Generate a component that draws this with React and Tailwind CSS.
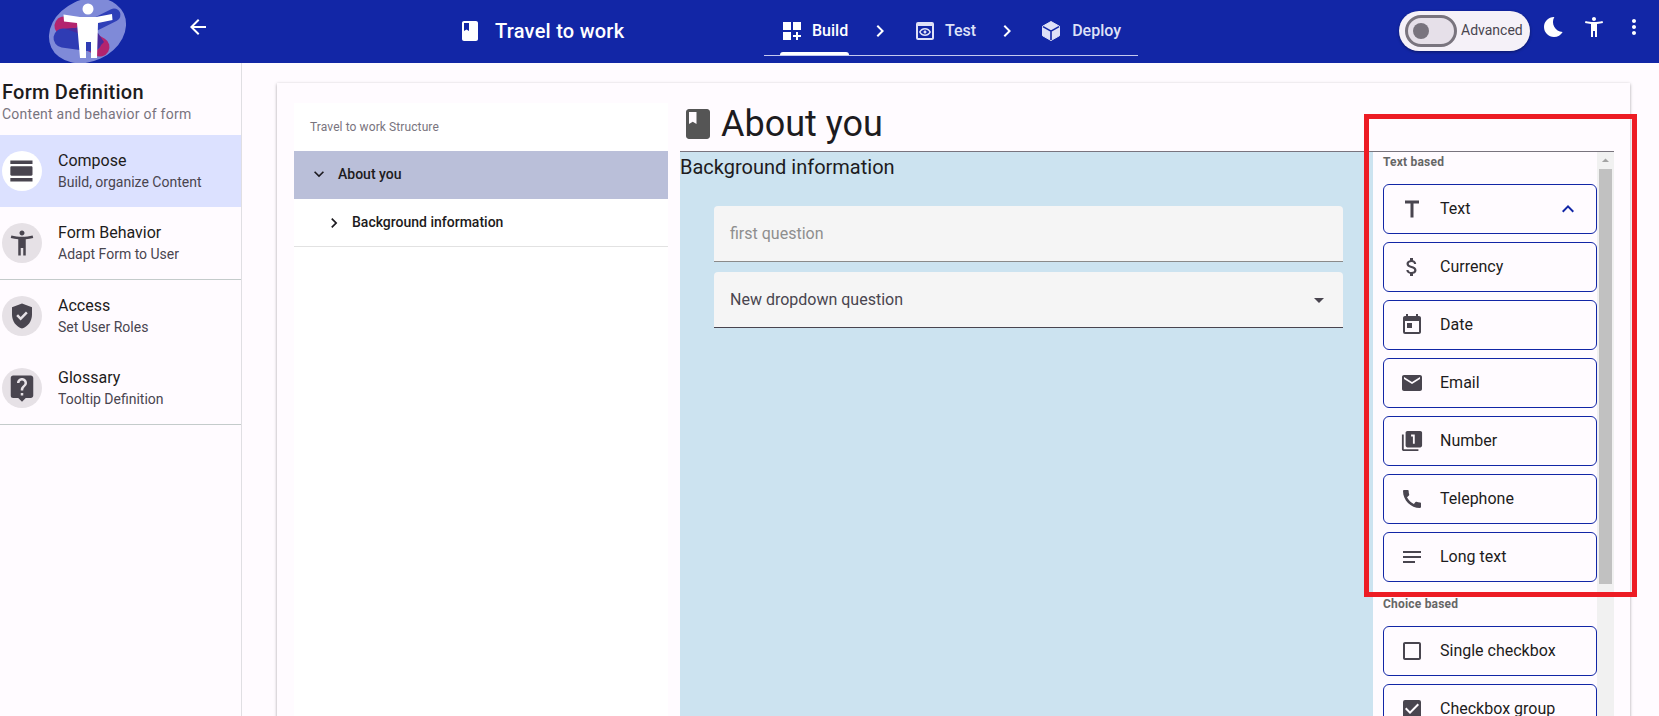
import React from "react";
import {
  MdArrowBack, MdBook, MdDashboardCustomize, MdOutlinePreview, MdChevronRight, MdViewDay, MdAccessibilityNew,
  MdGppGood, MdLiveHelp, MdBedtime, MdMoreVert, MdAttachMoney, MdToday, MdEmail, MdCall,
  MdNotes, MdCheckBoxOutlineBlank, MdCheckBox, MdExpandLess, MdExpandMore, MdArrowDropDown, MdArrowDropUp,
} from "react-icons/md";

function Logo() {
  return (
    <svg width="80" height="63" viewBox="0 0 80 63" className="block shrink-0">
      <ellipse cx="39.5" cy="30.5" rx="40" ry="31" transform="rotate(-25 39.5 30.5)" fill="#7f8ad8" />
      <line x1="16" y1="26" x2="52" y2="47" stroke="#b3246e" strokeWidth="19" strokeLinecap="round" />
      <line x1="34" y1="31" x2="66" y2="15" stroke="#2f3fb8" strokeWidth="13" strokeLinecap="round" />
      <line x1="15" y1="38" x2="44" y2="42" stroke="#2f3cb4" strokeWidth="19" strokeLinecap="round" />
      <path d="M17 29 C26 27 40 28 50 33 L56 42 L50 48 C44 39 30 32 17 29Z" fill="#4a2a9c" />
      <circle cx="40" cy="9" r="5.5" fill="#fff" />
      <path d="M15.5 14.5 L32 17 L48 17 L64 14 L64.5 20 L50 23 L49 58 L43 58 L43 42 L38 42 L38 58 L32 58 L29 23 L16 21.5Z" fill="#fff" />
    </svg>
  );
}

function DeployIcon({ className }) {
  return (
    <svg viewBox="0 0 24 24" className={className}>
      <path d="M12 2.5 L20.5 7.3 V16.7 L12 21.5 L3.5 16.7 V7.3Z" fill="currentColor" stroke="currentColor" strokeLinejoin="round" />
      <path d="M4 7.6 L12 12.2 L20 7.6 M12 12.2 V21" fill="none" stroke="#1226a6" strokeWidth="1.6" />
    </svg>
  );
}

function TitleIcon({ className }) {
  return (
    <svg viewBox="0 0 24 24" className={className} fill="currentColor">
      <path d="M5 3.5h14v3h-5.5v14h-3v-14H5z" />
    </svg>
  );
}

function NumberIcon({ className }) {
  return (
    <svg viewBox="0 0 24 24" className={className} fill="currentColor">
      <path d="M3 5H1v16c0 1.1.9 2 2 2h16v-2H3V5z" />
      <path fillRule="evenodd" d="M21 1H7c-1.1 0-2 .9-2 2v14c0 1.1.9 2 2 2h14c1.1 0 2-.9 2-2V3c0-1.1-.9-2-2-2zm-6 14h-2V7h-2V5h4v10z" />
    </svg>
  );
}

const sideItems = [
  { title: "Compose", sub: "Build, organize Content", Icon: MdViewDay, active: true, h: "h-[72px]", icon: "w-[28px] h-[28px]" },
  { title: "Form Behavior", sub: "Adapt Form to User", Icon: MdAccessibilityNew, border: true, h: "h-[73px]", icon: "w-[30px] h-[30px]" },
  { title: "Access", sub: "Set User Roles", Icon: MdGppGood, h: "h-[72px]", icon: "w-[30px] h-[30px]" },
  { title: "Glossary", sub: "Tooltip Definition", Icon: MdLiveHelp, border: true, h: "h-[73px]", icon: "w-[30px] h-[30px]" },
];

const textItems = [
  { label: "Text", Icon: TitleIcon, open: true },
  { label: "Currency", Icon: MdAttachMoney },
  { label: "Date", Icon: MdToday },
  { label: "Email", Icon: MdEmail },
  { label: "Number", Icon: NumberIcon, small: true },
  { label: "Telephone", Icon: MdCall },
  { label: "Long text", Icon: MdNotes },
];

const choiceItems = [
  { label: "Single checkbox", Icon: MdCheckBoxOutlineBlank },
  { label: "Checkbox group", Icon: MdCheckBox },
];

function PaletteButton({ label, Icon, open, small }) {
  return (
    <div className="h-[50px] shrink-0 flex items-center rounded-[6px] border border-[#1226a6] pl-[16px] pr-[16px] bg-[#fffbff]">
      <span className="w-[24px] h-[24px] shrink-0 flex items-center justify-center text-[#49454f]">
        <Icon className={small ? "w-[22px] h-[22px]" : "w-[24px] h-[24px]"} />
      </span>
      <span className="ml-[16px] text-[16px] text-[#1d1b20] leading-[24px]">{label}</span>
      {open && <MdExpandLess className="ml-auto w-[24px] h-[24px] text-[#1226a6]" />}
    </div>
  );
}

export default function App() {
  return (
    <div className="relative w-[1659px] h-[716px] overflow-hidden flex flex-col bg-[#fffbff] font-[Roboto,sans-serif]">
      <header className="h-[63px] shrink-0 bg-[#1226a6] flex items-start text-white overflow-hidden">
        <div className="w-[462px] h-full flex items-start pl-[48px] shrink-0">
          <Logo />
          <MdArrowBack className="ml-[58px] mt-[15px] w-[24px] h-[24px]" />
        </div>
        <div className="w-[302px] shrink-0 h-full flex items-center">
          <MdBook className="w-[24px] h-[24px] -ml-[4px] mb-[1px]" />
          <span className="ml-[13px] mb-[2px] text-[20px] font-medium leading-[24px] tracking-[0.25px]">Travel to work</span>
        </div>
        <nav className="w-[374px] shrink-0 h-[56px] border-b border-[#c5c9ef] flex items-center pl-[16px] pt-[6px]">
          <div className="relative h-full flex items-center w-[69px]">
            <MdDashboardCustomize className="w-[24px] h-[24px] shrink-0" />
            <span className="ml-[8px] text-[16px] font-medium">Build</span>
            <span className="absolute left-0 right-0 bottom-0 h-[3px] rounded-t-[3px] bg-white" />
          </div>
          <MdChevronRight className="ml-[19px] w-[24px] h-[24px]" />
          <div className="ml-[21px] flex items-center text-[#dfe1f7]">
            <MdOutlinePreview className="w-[24px] h-[24px] shrink-0" />
            <span className="ml-[8px] text-[16px] font-medium">Test</span>
          </div>
          <MdChevronRight className="ml-[19px] w-[24px] h-[24px]" />
          <div className="ml-[20px] flex items-center text-[#dfe1f7]">
            <DeployIcon className="w-[24px] h-[24px] shrink-0" />
            <span className="ml-[9px] text-[16px] font-medium">Deploy</span>
          </div>
        </nav>
        <div className="ml-[261px] mt-[11px] w-[131px] h-[40px] rounded-full bg-[#f5f1f8] shadow-[0_1px_3px_rgba(0,0,0,0.4)] flex items-center pl-[6px] shrink-0">
          <div className="w-[52px] h-[32px] rounded-full border-[3px] border-[#79747e] bg-[#e6e0e9] flex items-center pl-[5px]">
            <span className="w-[16px] h-[16px] rounded-full bg-[#79747e]" />
          </div>
          <span className="ml-[4px] mb-[1px] text-[14px] text-[#49454f]">Advanced</span>
        </div>
        <MdBedtime className="ml-[12px] mt-[15px] w-[24px] h-[24px]" />
        <MdAccessibilityNew className="ml-[16px] mt-[15px] w-[24px] h-[24px]" />
        <MdMoreVert className="ml-[16px] mt-[15px] w-[24px] h-[24px]" />
      </header>

      <div className="flex flex-1 min-h-0">
        <aside className="w-[242px] shrink-0 border-r border-[#e0dfe3]">
          <div className="h-[72px] pl-[2px] pt-[17px]">
            <div className="text-[20px] font-medium leading-[24px] tracking-[0.25px] text-[#1d1b20]">Form Definition</div>
            <div className="text-[14px] leading-[20px] tracking-[0.25px] text-[#79747e]">Content and behavior of form</div>
          </div>
          {sideItems.map(({ title, sub, Icon, active, border, h, icon }) => (
            <div
              key={title}
              className={`${h} flex items-start pl-[2px] ${active ? "bg-[#dce1ff]" : ""} ${border ? "border-b border-[#c4cbcb]" : ""}`}
            >
              <div className={`mt-[16px] w-[40px] h-[40px] rounded-full flex items-center justify-center shrink-0 ${active ? "bg-white" : "bg-[#e6e1e6]"}`}>
                <Icon className={`${icon} text-[#49454f]`} />
              </div>
              <div className="ml-[16px] mt-[14px]">
                <div className="text-[16px] leading-[24px] text-[#1d1b20]">{title}</div>
                <div className="text-[14px] leading-[18px] text-[#49454f]">{sub}</div>
              </div>
            </div>
          ))}
        </aside>

        <main className="flex-1 min-w-0 pl-[35px] pt-[20px]">
          <div className="w-[1353px] h-[700px] shadow-[0_1px_3px_rgba(0,0,0,0.35)] bg-[#fffbff] flex pl-[17px] pt-[20px]">
            <div className="w-[374px] shrink-0 bg-white">
              <div className="h-[48px] pl-[16px] flex items-center text-[12px] tracking-[0.1px] text-[#79747e]">Travel to work Structure</div>
              <div className="h-[48px] bg-[#babfd9] flex items-center pl-[15px] pb-[2px]">
                <MdExpandMore className="w-[20px] h-[20px] text-[#1d1b20]" />
                <span className="ml-[9px] text-[14px] font-medium text-[#1d1b20]">About you</span>
              </div>
              <div className="h-[48px] border-b border-[#e2e2e2] flex items-center pl-[30px]">
                <MdChevronRight className="w-[20px] h-[20px] text-[#1d1b20]" />
                <span className="ml-[8px] text-[14px] font-medium text-[#1d1b20]">Background information</span>
              </div>
            </div>

            <div className="ml-[12px] w-[934px] shrink-0 flex flex-col">
              <div className="h-[49px] shrink-0 border-b border-[#79747e] flex items-center pb-[6px]">
                <MdBook className="w-[36px] h-[36px] text-[#555555] shrink-0" />
                <span className="ml-[5px] text-[36px] leading-[40px] text-[#1d1b20]">About you</span>
              </div>
              <div className="flex flex-1 min-h-0">
                <div className="w-[693px] shrink-0 bg-[#cce3f0]">
                  <div className="text-[20px] leading-[24px] mt-[3px] text-[#1d1b20]">Background information</div>
                  <div className="ml-[34px] mt-[27px] w-[629px] flex flex-col gap-[10px]">
                    <div className="h-[56px] rounded-t-[4px] bg-[#f5f5f5] border-b border-[#8a8a8a] flex items-center pl-[16px] text-[16px] text-[#8e8e8e]">
                      first question
                    </div>
                    <div className="h-[56px] rounded-t-[4px] bg-[#f5f5f5] border-b border-[#49454f] flex items-center pl-[16px] pr-[12px] text-[16px] text-[#49454f]">
                      New dropdown question
                      <MdArrowDropDown className="ml-auto w-[24px] h-[24px] text-[#49454f]" />
                    </div>
                  </div>
                </div>
                <div className="flex-1 flex min-w-0 overflow-hidden">
                  <div className="w-[224px] shrink-0 pl-[10px] flex flex-col">
                    <div className="text-[12px] font-bold leading-[16px] tracking-[0.2px] text-[#666666] mt-[2px] mb-[14px]">Text based</div>
                    <div className="flex flex-col gap-[8px]">
                      {textItems.map((it) => <PaletteButton key={it.label} {...it} />)}
                    </div>
                    <div className="text-[12px] font-bold leading-[16px] tracking-[0.2px] text-[#666666] mt-[14px] mb-[14px]">Choice based</div>
                    <div className="flex flex-col gap-[8px]">
                      {choiceItems.map((it) => <PaletteButton key={it.label} {...it} />)}
                    </div>
                  </div>
                  <div className="flex-1 bg-[#f1f1f1] flex flex-col items-center">
                    <MdArrowDropUp className="w-[17px] h-[17px] text-[#a3a3a3] shrink-0" />
                    <div className="w-[13px] h-[415px] bg-[#c1c1c1]" />
                  </div>
                </div>
              </div>
            </div>
          </div>
        </main>
      </div>

      <div className="absolute left-[1364px] top-[114px] w-[273px] h-[483px] border-[5px] border-[#ed1c24] pointer-events-none" />
    </div>
  );
}
